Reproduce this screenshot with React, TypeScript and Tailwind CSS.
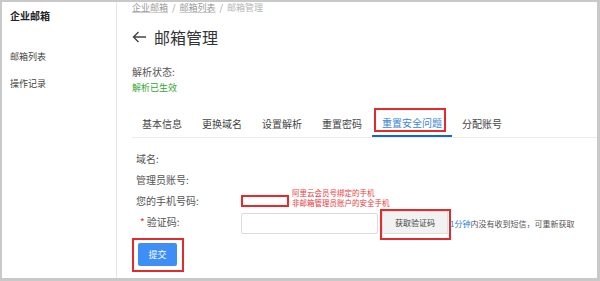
import React from "react";

const tabs = ["基本信息", "更换域名", "设置解析", "重置密码", "重置安全问题", "分配账号"];
const activeTab = 4;

export default function App() {
  return (
    <div
      className="w-[600px] h-[281px] overflow-hidden bg-white border-2 border-r-[3px] border-b-[3px] border-[#c9c9c9] flex text-[#333]"
      style={{ fontFamily: '"Noto Sans CJK SC", "Noto Sans", sans-serif' }}
    >
      {/* sidebar */}
      <aside className="w-[115px] shrink-0 border-r border-[#e6e6e6] pl-[8px]">
        <div className="mt-[8px] text-[10px] leading-[12px] font-bold text-[#222]">企业邮箱</div>
        <div className="mt-[29px] text-[9px] leading-[12px] text-[#444]">邮箱列表</div>
        <div className="mt-[15px] text-[9px] leading-[12px] text-[#444]">操作记录</div>
      </aside>

      {/* main */}
      <main className="flex-1 pl-[15px]">
        <div className="text-[9px] leading-[11px] text-[#9a9a9a] flex gap-[4px]">
          <span className="underline decoration-[#ccc]">企业邮箱</span>
          <span>/</span>
          <span className="underline decoration-[#ccc]">邮箱列表</span>
          <span>/</span>
          <span className="text-[#b5b5b5]">邮箱管理</span>
        </div>

        <h1 className="mt-[14px] text-[16px] leading-[20px] text-[#333] flex items-center gap-[7px]">
          <svg width="15" height="12" viewBox="0 0 15 12" fill="none" stroke="#444" strokeWidth="1.4">
            <path d="M14 6H1.5M6.5 1L1.5 6l5 5" />
          </svg>
          <span>邮箱管理</span>
        </h1>

        <div className="mt-[19px] text-[10px] leading-[12px] text-[#555]">解析状态:</div>
        <div className="mt-[4px] text-[9px] leading-[12px] text-[#2ea52e]">解析已生效</div>

        {/* tabs */}
        <div className="mt-[15px] flex border-b border-[#ececec] text-[10px]">
          {tabs.map((t, i) => (
            <div
              key={t}
              className={
                "relative h-[28px] px-[10px] pt-[1px] flex items-center " +
                (i === activeTab ? "text-[#3a86d8] border-b-2 border-[#1668c8] -mb-[1px]" : "text-[#444]")
              }
            >
              {t}
              {i === activeTab && (
                <div className="absolute left-[2px] right-[6px] top-[-1px] bottom-[3px] border-2 border-[#e42b2b]" />
              )}
            </div>
          ))}
        </div>

        {/* form */}
        <div className="pt-[10px] pl-[4px] text-[10px] text-[#555]">
          <div className="h-[21px] flex items-center">域名:</div>
          <div className="h-[21px] flex items-center">管理员账号:</div>
          <div className="h-[21px] flex items-center">
            <div className="w-[105px]">您的手机号码:</div>
            <div className="relative">
              <div className="w-[48px] h-[12px] border-2 border-[#e42b2b]" />
              <div className="absolute left-[51px] top-[-7px] whitespace-nowrap text-[7.5px] leading-[10px] text-[#e83a3a]">
                <div>阿里云会员号绑定的手机</div>
                <div>非邮箱管理员账户的安全手机</div>
              </div>
            </div>
          </div>
          <div className="h-[21px] flex items-start">
            <div className="w-[105px] leading-[21px] pl-[4px]">
              <span className="text-[#e42b2b] mr-[2px]">*</span>验证码:
            </div>
            <div className="mt-[2px] w-[137px] h-[21px] border border-[#dcdcdc] rounded-[2px]" />
            <div className="relative ml-[4px]">
              <div className="w-[66px] h-[23px] bg-[#f2f2f2] border border-[#e0e0e0] flex items-center justify-center text-[8px] text-[#444]">
                获取验证码
              </div>
              <div className="absolute left-[-2px] right-[-3px] top-[-2px] bottom-[-6px] border-2 border-[#e42b2b]" />
            </div>
            <div className="ml-[2px] mt-[8px] text-[8px] leading-[10px] text-[#555] whitespace-nowrap">
              <span className="text-[#2f7fd8]">1分钟</span>内没有收到短信，可重新获取
            </div>
          </div>

          <div className="mt-[11px] ml-[2px] relative w-[39px]">
            <button className="w-[39px] h-[23px] bg-[#3d8ff5] rounded-[2px] text-white text-[9px] flex items-center justify-center">
              提交
            </button>
            <div className="absolute left-[-6px] right-[-7px] top-[-5px] bottom-[-6px] border-2 border-[#e42b2b]" />
          </div>
        </div>
      </main>
    </div>
  );
}
